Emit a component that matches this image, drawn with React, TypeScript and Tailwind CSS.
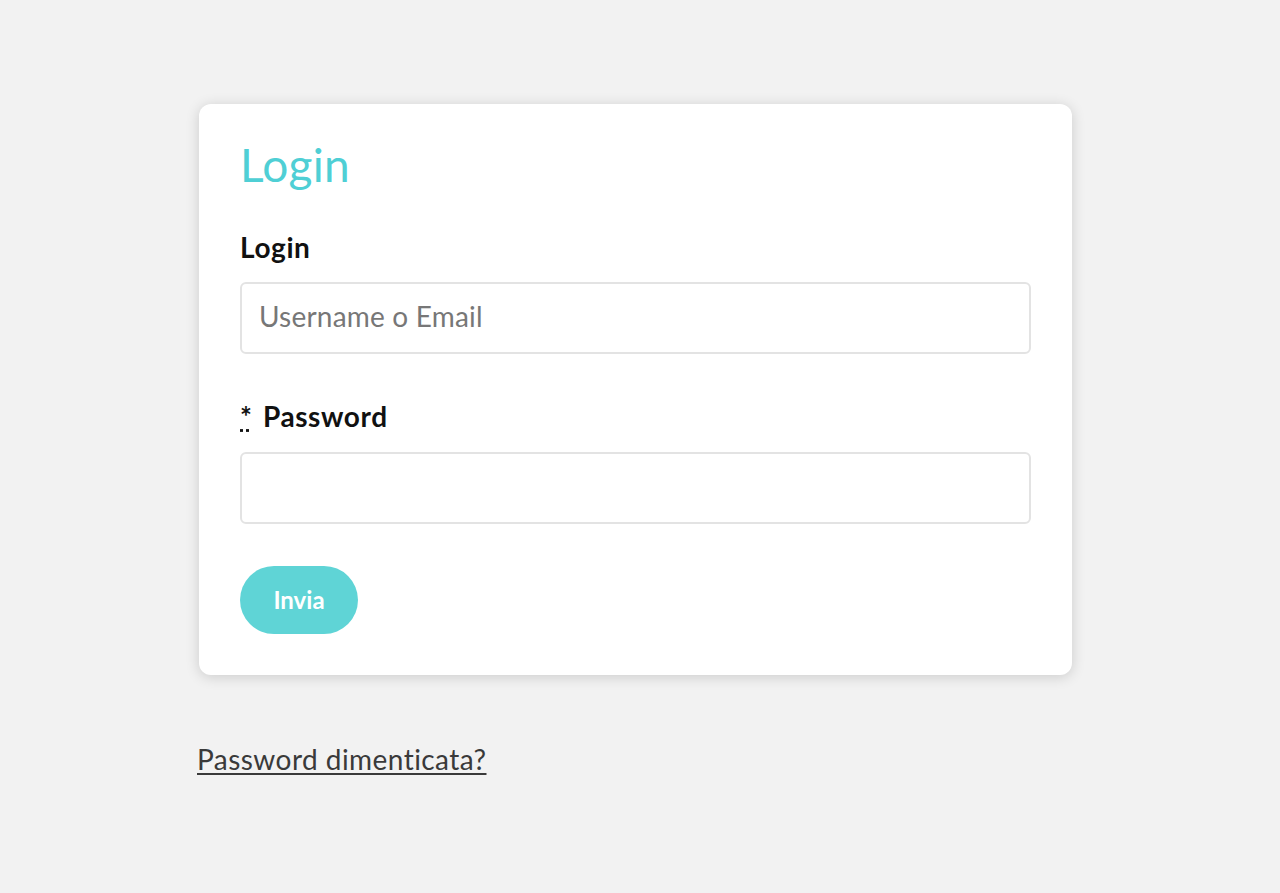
export default function App() {
  return (
    <div className="min-h-[893px] bg-[#f2f2f2] pl-[199px] pt-[104px] font-['Lato',sans-serif]">
      <div className="w-[873px] rounded-xl bg-white px-[41px] pt-[33px] pb-[41px] shadow-[0_2px_14px_rgba(0,0,0,0.16)]">
        <h1 className="text-[46px] leading-[1.2] tracking-[0.3px] text-[#4fcfd5]">Login</h1>

        <form onSubmit={(e) => e.preventDefault()}>
          <label htmlFor="login" className="mt-[39px] block text-[28px] font-bold leading-[1.2] tracking-[0.6px] text-[#111]">
            Login
          </label>
          <input
            id="login"
            type="text"
            placeholder="Username o Email"
            className="mt-[17px] block h-[72px] w-full rounded-md border-2 border-[#e3e3e3] pl-[17px] pb-[3px] text-[28px] tracking-[0.2px] text-[#222] outline-none placeholder:text-[#777]"
          />

          <label htmlFor="password" className="mt-[46px] block text-[28px] font-bold leading-[1.2] tracking-[0.6px] text-[#111]">
            <abbr title="obbligatorio" className="mr-[3px]">*</abbr> Password
          </label>
          <input
            id="password"
            type="password"
            className="mt-[19px] block h-[72px] w-full rounded-md border-2 border-[#e3e3e3] pl-[17px] text-[28px] text-[#222] outline-none"
          />

          <button
            type="submit"
            className="mt-[42px] block h-[68px] w-[118px] rounded-full bg-[#5fd4d6] text-[24px] font-bold text-white"
          >
            Invia
          </button>
        </form>
      </div>

      <a href="#" className="mt-[68px] inline-block -ml-[2px] text-[28px] leading-[1.2] tracking-[0.45px] text-[#3a3a3a] underline underline-offset-[3px] decoration-[1.5px]">
        Password dimenticata?
      </a>
    </div>
  );
}
